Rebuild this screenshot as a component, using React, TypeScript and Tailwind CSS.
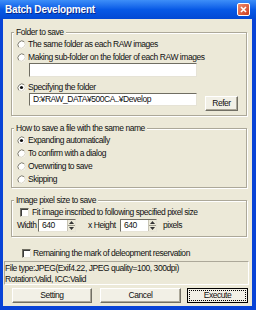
import React from "react";

const font = "font-['Liberation_Sans',Arial,sans-serif]";

function Radio({ checked = false }: { checked?: boolean }) {
  return (
    <svg width="9" height="9" viewBox="0 0 9 9" className="shrink-0">
      <circle cx="4.5" cy="4.5" r="4" fill="#fff" />
      <path d="M7.3 1.7 A4 4 0 0 0 1.7 7.3" stroke="#7a7868" fill="none" />
      <path d="M7.3 1.7 A4 4 0 0 1 1.7 7.3" stroke="#d8d4c4" fill="none" />
      {checked && <circle cx="4.5" cy="4.5" r="1.6" fill="#111" />}
    </svg>
  );
}

function Check() {
  return (
    <div className="w-[9px] h-[9px] shrink-0 bg-white border border-t-[#6f6d62] border-l-[#6f6d62] border-b-[#e6e3d6] border-r-[#e6e3d6] shadow-[inset_1px_1px_0_#3c3c3c]" />
  );
}

function Row({ checked, label }: { checked?: boolean; label: string }) {
  return (
    <div className="flex items-center h-[13px] gap-[2px] whitespace-nowrap">
      <Radio checked={checked} />
      <span>{label}</span>
    </div>
  );
}

function Spin({ value, w }: { value: string; w: string }) {
  return (
    <div
      className={`${w} h-[13px] shrink-0 flex bg-white border border-t-[#6f6d62] border-l-[#6f6d62] border-b-[#e6e3d6] border-r-[#e6e3d6]`}
    >
      <span className="flex-1 pl-[3px] leading-[11px]">{value}</span>
      <div className="w-[8px] flex flex-col bg-[#ece9d8] border-l border-[#c8c4b4]">
        <div className="flex-1 flex items-center justify-center">
          <svg width="5" height="3" viewBox="0 0 5 3">
            <path d="M0 3 L2.5 0 L5 3 Z" fill="#333" />
          </svg>
        </div>
        <div className="h-px bg-[#9a9888]" />
        <div className="flex-1 flex items-center justify-center">
          <svg width="5" height="3" viewBox="0 0 5 3">
            <path d="M0 0 L2.5 3 L5 0 Z" fill="#333" />
          </svg>
        </div>
      </div>
    </div>
  );
}

const groupCls =
  "ml-[8px] w-[236px] border border-[#aca899] shadow-[inset_1px_1px_0_#fff,1px_1px_0_#fff]";
const legendCls = "ml-[2px] px-[2px] leading-[10px] bg-[#ece9d8]";
const btnCls =
  "h-[15px] flex items-center justify-center bg-[#f2f0e6] border border-t-white border-l-white border-b-[#716f64] border-r-[#716f64] shadow-[inset_-1px_-1px_0_#aca899]";

export default function App() {
  return (
    <div className={`${font} w-[256px] h-[310px] bg-[#0843d6] flex flex-col text-[8.5px] tracking-[-0.45px] text-[#111] overflow-hidden`}>
      {/* title bar */}
      <div className="h-[19px] flex items-center pl-[5px] pr-[6px] bg-gradient-to-b from-[#3d8ef8] via-[#0759e6] to-[#0349d4]">
        <span className="text-white font-bold text-[10px] tracking-[-0.2px] [text-shadow:1px_1px_0_#0a2a8a]">
          Batch Development
        </span>
        <div className="ml-auto w-[13px] h-[13px] rounded-[2px] border border-white bg-gradient-to-br from-[#f08a6c] to-[#cc3a17] flex items-center justify-center">
          <svg width="7" height="7" viewBox="0 0 7 7">
            <path d="M1 1 L6 6 M6 1 L1 6" stroke="#fff" strokeWidth="1.6" />
          </svg>
        </div>
      </div>

      {/* body */}
      <div className="flex-1 ml-[3px] mr-[4px] mb-[4px] bg-[#ece9d8] flex flex-col">
        <fieldset className={`${groupCls} mt-[8px]`}>
          <legend className={legendCls}>Folder to save</legend>
          <div className="pt-[1px] px-[5px] pb-[4px]">
            <div className="flex items-center h-[12px] gap-[2px] whitespace-nowrap">
              <Radio />
              <span>The same folder as each RAW images</span>
            </div>
            <div className="flex items-center h-[12px] mt-[1px] gap-[2px] whitespace-nowrap">
              <Radio />
              <span>Making sub-folder on the folder of each RAW images</span>
            </div>
            <div className="ml-[12px] w-[168px] h-[14px] bg-white border border-t-[#6f6d62] border-l-[#6f6d62] border-b-[#e6e3d6] border-r-[#e6e3d6]" />
            <div className="flex items-center h-[12px] mt-[4px] gap-[2px] whitespace-nowrap">
              <Radio checked />
              <span>Specifying the folder</span>
            </div>
            <div className="flex items-start">
              <div className="ml-[12px] w-[168px] h-[13px] pl-[3px] leading-[11px] bg-white border border-t-[#6f6d62] border-l-[#6f6d62] border-b-[#e6e3d6] border-r-[#e6e3d6] whitespace-nowrap">
                D:¥RAW_DATA¥500CA..¥Develop
              </div>
              <div className={`${btnCls} ml-[8px] mt-[3px] w-[33px]`}>Refer</div>
            </div>
          </div>
        </fieldset>

        <fieldset className={`${groupCls} mt-[7px]`}>
          <legend className={legendCls}>How to save a file with the same name</legend>
          <div className="pt-[1px] px-[5px] pb-[1px]">
            <Row checked label="Expanding automatically" />
            <Row label="To confirm with a dialog" />
            <Row label="Overwriting to save" />
            <Row label="Skipping" />
          </div>
        </fieldset>

        <fieldset className={`${groupCls} mt-[7px]`}>
          <legend className={legendCls}>Image pixel size to save</legend>
          <div className="pt-[1px] px-[5px] pb-[4px]">
            <div className="flex items-center h-[12px] gap-[3px] pl-[3px] whitespace-nowrap">
              <Check />
              <span>Fit image inscribed to following specified pixel size</span>
            </div>
            <div className="flex items-center h-[13px] mt-[1px] whitespace-nowrap">
              <span className="w-[21px] shrink-0">Width</span>
              <Spin value="640" w="w-[38px]" />
              <span className="ml-[12px] w-[32px] shrink-0">x Height</span>
              <Spin value="640" w="w-[37px]" />
              <span className="ml-[6px]">pixels</span>
            </div>
          </div>
        </fieldset>

        <div className="flex items-center h-[12px] mt-[10px] ml-[19px] gap-[2px] whitespace-nowrap">
          <Check />
          <span>Remaining the mark of deleopment reservation</span>
        </div>

        <div className="mt-[2px] ml-[1px] w-[245px] h-[24px] pt-[1px] leading-[11px] border border-t-[#aca899] border-l-[#aca899] border-b-white border-r-white whitespace-nowrap">
          <div>File type:JPEG(Exif4.22, JPEG quality=100, 300dpi)</div>
          <div>Rotation:Valid, ICC:Valid</div>
        </div>

        <div className="flex mt-[3px]">
          <div className={`${btnCls} ml-[9px] w-[80px]`}>Setting</div>
          <div className={`${btnCls} ml-[8px] w-[81px]`}>Cancel</div>
          <div className="ml-[6px] w-[61px] h-[15px] p-[1px] border border-black bg-[#f2f0e6]">
            <div className="h-full flex items-center justify-center border border-dotted border-black">
              Execute
            </div>
          </div>
        </div>
      </div>
    </div>
  );
}
